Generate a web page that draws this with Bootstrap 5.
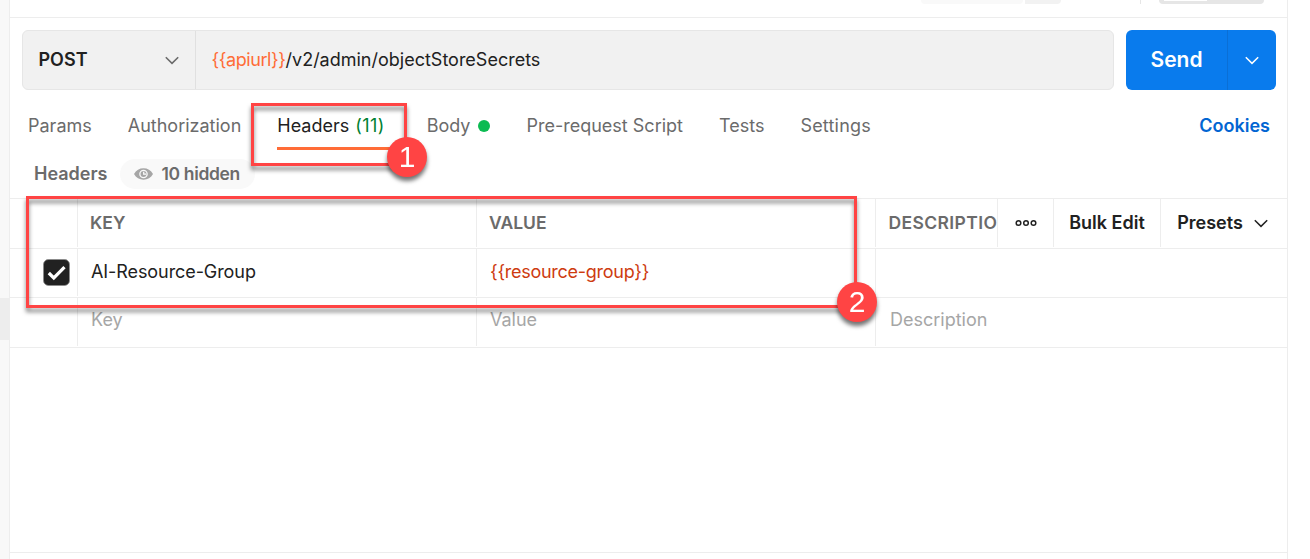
<!DOCTYPE html>
<html lang="en">
<head>
<meta charset="utf-8">
<title>Request headers</title>
<link href="https://cdn.jsdelivr.net/npm/bootstrap@5.3.0/dist/css/bootstrap.min.css" rel="stylesheet">
<style>
  :root { --line: #ededed; --ink: #212121; --muted: #6b6b6b; --callout: #ff4444; }
  body { font-family: Inter, "Liberation Sans", sans-serif; font-size: 18px; line-height: 28px; color: var(--ink); height: 559px; overflow: hidden; background: #fff; }
  svg { display: block; flex: none; }
  .rail { width: 10px; background: #f8f8f8; border-right: 1px solid var(--line); padding-top: 298px; }
  .rail-thumb { height: 42px; background: #ededed; }
  .pane { width: 1278px; border-right: 1px solid var(--line); }
  .topstrip { height: 18px; border-bottom: 1px solid var(--line); padding-right: 23px; }
  .stub { height: 4px; border-radius: 0 0 6px 6px; }
  .stub-a { width: 102px; background: #f9f9f9; }
  .stub-b { width: 36px; background: #f2f2f2; margin-left: 2px; border-bottom-left-radius: 0; }
  .stub-line { width: 1px; height: 4px; background: #e6e6e6; margin: 0 18px 0 79px; }
  .stub-c { width: 105px; background: #e6e6e6; padding-left: 5px; }
  .stub-c div { width: 43px; height: 1px; background: #fff; }
  .urlrow { padding: 12px 11px 0 12px; gap: 12px; }
  .urlbox { width: 1092px; height: 60px; background: #f1f1f1; border: 1px solid #e6e6e6; border-radius: 6px; }
  .method { width: 173px; border-right: 1px solid #e0e0e0; padding: 0 16px 0 15.5px; }
  .url { padding-left: 15.5px; }
  .var-tok { color: #ff6c37; letter-spacing: -.42px; }
  .send { width: 150px; height: 60px; background: #097bed; border-radius: 6px; color: #fff; font-size: 21px; }
  .send-main { width: 102px; border-right: 1px solid #0a6fd6; }
  .tabs { height: 70px; padding: 22px 17px 0 18px; color: var(--muted); }
  .tab { position: relative; height: 38px; white-space: nowrap; }
  .tab-set { gap: 36px; }
  .tab-on { color: var(--ink); }
  .tab-on::after { content: ""; position: absolute; left: 0; right: -6px; top: 35px; height: 3px; background: #ff6c37; }
  .tab-count { color: #007f31; margin-left: 1px; letter-spacing: .4px; }
  .dot { width: 12px; height: 12px; border-radius: 50%; background: #0cbb52; margin-left: 8px; }
  .subrow { height: 38px; padding-left: 24px; color: var(--muted); font-weight: 600; }
  .pill { height: 30px; width: 135px; background: #f9f9f9; border-radius: 15px; padding-left: 14px; margin: -1px 0 0 12px; font-size: 17.5px; letter-spacing: -.34px; }
  .pill svg { margin-right: 9px; }
  .kv { border-top: 1px solid var(--line); }
  .kv-row { display: grid; grid-template-columns: 68px 399px 399px 1fr; border-bottom: 1px solid var(--line); }
  .cell { border-right: 1px solid var(--line); display: flex; align-items: center; overflow: hidden; white-space: nowrap; margin-bottom: 1px; }
  .kv-head { color: var(--muted); font-weight: 600; font-size: 17.5px; grid-template-columns: 68px 399px 399px 122px 56px 107px 1fr; }
  .body-pad { padding-left: 13px; }
  .head-pad { padding-left: 12px; }
  .head-desc { padding-left: 12.5px; letter-spacing: .38px; }
  .act { color: var(--ink); justify-content: center; font-size: 18px; }
  .check { width: 27px; height: 27px; margin-left: 33px; }
  .foot { position: absolute; left: 10px; width: 1277px; top: 552px; border-top: 1px solid var(--line); }
  .callout { position: absolute; border: 3px solid var(--callout); filter: drop-shadow(0 4px 2.2px rgba(0,0,0,.5)); pointer-events: none; }
  .callout-1 { left: 251px; top: 103px; width: 156px; height: 63px; }
  .callout-2 { left: 26px; top: 196px; width: 831px; height: 112px; }
  .num { position: absolute; width: 40px; height: 40px; border-radius: 50%; background: var(--callout); color: #fff; font: 30px/40px "Liberation Sans", sans-serif; text-align: center; filter: drop-shadow(0 4px 2.2px rgba(0,0,0,.55)); }
  .num-1 { left: 387px; top: 137px; }
  .num-2 { left: 837px; top: 282px; }
</style>
</head>
<body class="d-flex position-relative">
  <div class="rail flex-shrink-0"><div class="rail-thumb"></div></div>
  <main class="pane flex-shrink-0">
    <div class="topstrip d-flex justify-content-end">
      <div class="stub stub-a"></div><div class="stub stub-b"></div>
      <div class="stub-line"></div>
      <div class="stub stub-c"><div></div></div>
    </div>

    <div class="urlrow d-flex">
      <div class="urlbox d-flex">
        <div class="method d-flex align-items-center justify-content-between">
          <span class="fw-semibold">POST</span>
          <svg width="14" height="9" viewBox="0 0 14 9" fill="none" stroke="#6b6b6b" stroke-width="1.6"><path d="M.8 1.2 7 7.4l6.2-6.2"/></svg>
        </div>
        <div class="url d-flex align-items-center"><span><span class="var-tok">{{apiurl}}</span>/v2/admin/objectStoreSecrets</span></div>
      </div>
      <div class="send d-flex fw-semibold">
        <div class="send-main d-flex align-items-center justify-content-center">Send</div>
        <div class="flex-fill d-flex align-items-center justify-content-center">
          <svg width="14" height="9" viewBox="0 0 14 9" fill="none" stroke="#fff" stroke-width="1.5"><path d="M.8 1.2 7 7.4l6.2-6.2"/></svg>
        </div>
      </div>
    </div>

    <nav class="tabs d-flex">
      <div class="tab-set me-auto d-flex">
        <div class="tab">Params</div>
        <div class="tab">Authorization</div>
        <div class="tab tab-on">Headers <span class="tab-count">(11)</span></div>
        <div class="tab d-flex" style="margin-left:6px"><span>Body</span><span class="dot mt-2"></span></div>
        <div class="tab">Pre-request Script</div>
        <div class="tab">Tests</div>
        <div class="tab" style="letter-spacing:.2px">Settings</div>
      </div>
      <div class="tab fw-semibold" style="color:#0265d2">Cookies</div>
    </nav>

    <div class="subrow d-flex">
      <span>Headers</span>
      <div class="pill d-flex align-items-center">
        <svg width="19" height="12" viewBox="0 0 19 12"><path fill="#a6a6a6" fill-rule="evenodd" d="M0 6C2 2.300 5.500.3 9.500.3S17 2.300 19 6c-2 3.700-5.500 5.700-9.500 5.700S2 9.700 0 6Zm9.500-4.300a4.300 4.300 0 1 0 0 8.600 4.300 4.300 0 0 0 0-8.600Z"/><circle cx="9.500" cy="6" r="3" fill="#a6a6a6"/><path d="M9.700 3.700V6.200h2.500" fill="none" stroke="#fff" stroke-width="1.200"/></svg>
        <span>10 hidden</span>
      </div>
    </div>

    <section class="kv">
      <div class="kv-row kv-head" style="height:50px">
        <div class="cell"></div>
        <div class="cell head-pad">KEY</div>
        <div class="cell head-pad">VALUE</div>
        <div class="cell head-desc">DESCRIPTIO</div>
        <div class="cell act"><svg width="22" height="8" viewBox="0 0 22 8" fill="none" stroke="#212121" stroke-width="1.500"><circle cx="3.500" cy="4" r="2.300"/><circle cx="11" cy="4" r="2.300"/><circle cx="18.500" cy="4" r="2.300"/></svg></div>
        <div class="cell act">Bulk Edit</div>
        <div class="cell act border-end-0" style="padding-right:3px">Presets<svg style="margin-left:11px" width="14" height="9" viewBox="0 0 14 9" fill="none" stroke="#212121" stroke-width="1.500"><path d="M.8 1.200 7 7.400l6.200-6.200"/></svg></div>
      </div>
      <div class="kv-row" style="height:49px">
        <div class="cell"><svg class="check" viewBox="0 0 27 27"><rect x=".5" y=".5" width="26" height="26" rx="5" fill="#212121" stroke="#8a8a8a" stroke-width=".8"/><path d="m5.800 14 5 5L21.500 8.200" fill="none" stroke="#fff" stroke-width="3.200"/></svg></div>
        <div class="cell body-pad" style="letter-spacing:-.08px;padding-bottom:2px">AI-Resource-Group</div>
        <div class="cell body-pad" style="color:#ce3b10;letter-spacing:-.27px;padding-bottom:2px">{{resource-group}}</div>
        <div></div>
      </div>
      <div class="kv-row" style="height:50px;color:#a6a6a6">
        <div class="cell"></div>
        <div class="cell body-pad pb-1">Key</div>
        <div class="cell body-pad pb-1">Value</div>
        <div class="cell body-pad pb-1 border-end-0" style="padding-left:14px">Description</div>
      </div>
    </section>
  </main>
  <div class="foot"></div>

  <div class="callout callout-1"></div>
  <div class="callout callout-2"></div>
  <div class="num num-1">1</div>
  <div class="num num-2">2</div>
<script src="https://cdn.jsdelivr.net/npm/bootstrap@5.3.0/dist/js/bootstrap.bundle.min.js"></script>
</body>
</html>
